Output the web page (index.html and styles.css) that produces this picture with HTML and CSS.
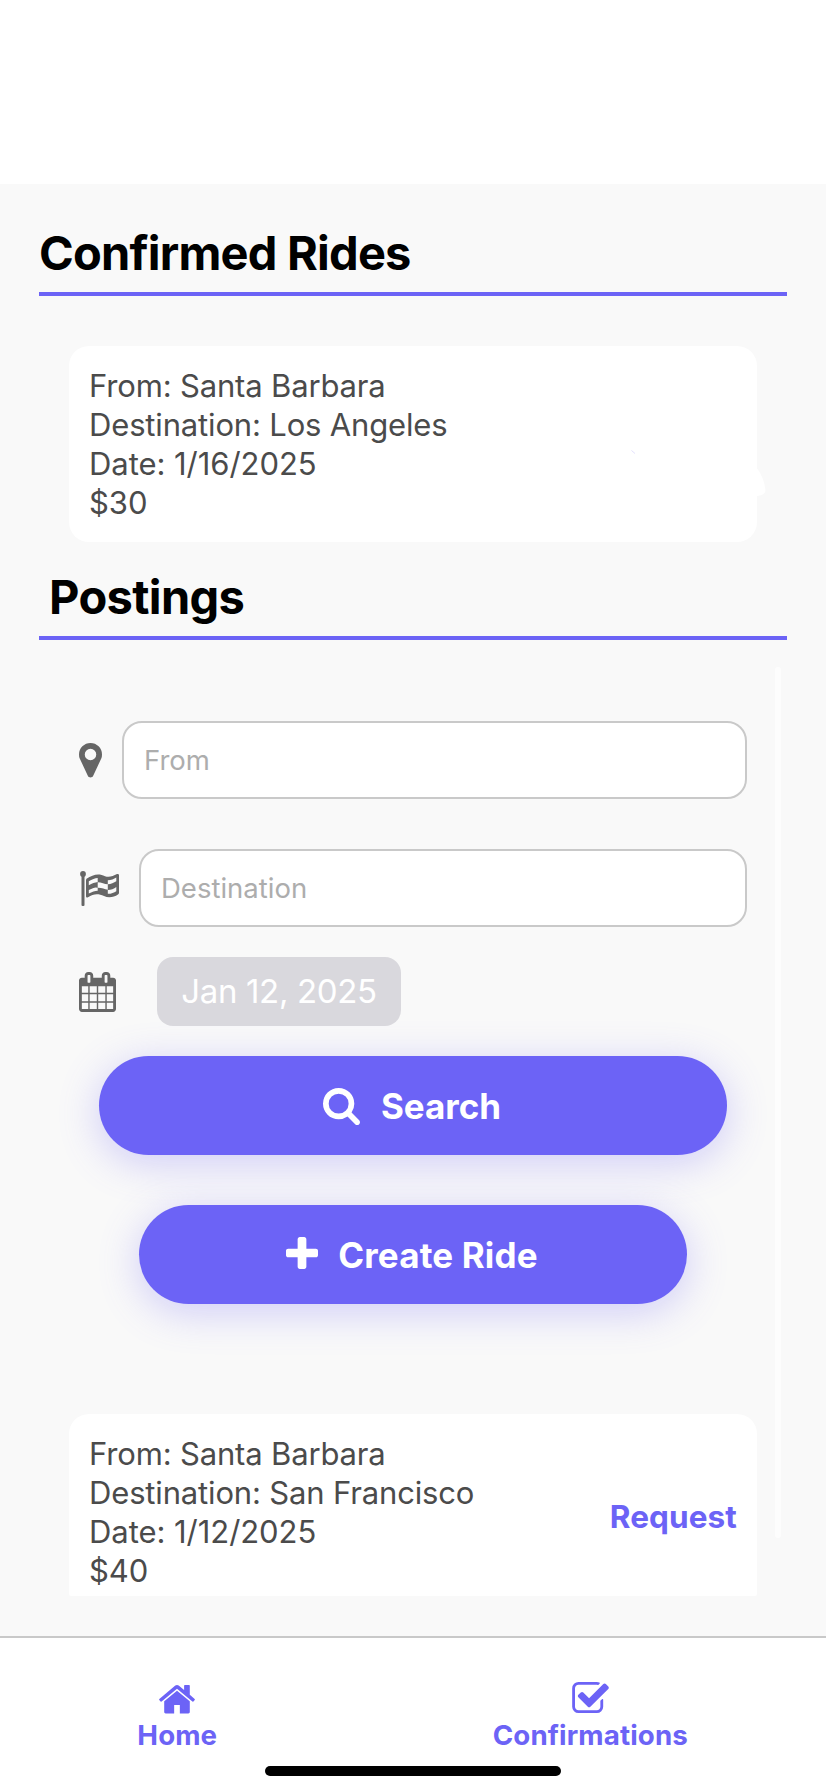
FILE: index.html
```html
<!DOCTYPE html>
<html lang="en">
<head>
<meta charset="utf-8">
<title>Rides</title>
<link rel="stylesheet" href="styles.css">
</head>
<body>
<div class="screen">
  <main class="content">
    <h1 class="heading">Confirmed Rides</h1>
    <section class="card card-confirmed">
      <div class="ride">
        <p>From: Santa Barbara</p>
        <p>Destination: Los Angeles</p>
        <p class="numeric">Date: 1/16/2025</p>
        <p class="numeric">$30</p>
      </div>
      <svg class="smudge" viewBox="0 0 10 30"><path d="M0 0Q8 10 9.500 23Q9 29 0 29Z"/></svg>
      <svg class="speck" viewBox="0 0 10 10"><path d="M4.500 4.500l3.500 3"/></svg>
    </section>
    <h1 class="heading heading-postings">Postings</h1>
    <section class="postings">
      <div class="scrollbar"></div>
      <div class="field-row">
        <svg class="icon icon-pin" viewBox="0 128 1024 1536"><path d="M768 640q0-106-75-181t-181-75-181 75-75 181 75 181 181 75 181-75 75-181zm256 0q0 109-33 179l-364 774q-16 33-47.500 52t-67.500 19-67.500-19-46.500-52l-365-774q-33-70-33-179 0-212 150-362t362-150 362 150 150 362z"/></svg>
        <div class="input">From</div>
      </div>
      <div class="field-row field-destination">
        <svg class="icon icon-flag" viewBox="0 0 39 35">
          <circle cx="3" cy="3" r="2.900"/>
          <rect x="1.500" y="3" width="3" height="32" rx="1"/>
          <path fill-rule="evenodd" d="M6.500 7.800C13 3.200 19 2 25 5.200C29 6.700 33 5.200 37 3Q39 2.500 39 4.200V21.800Q39 22.900 38 23.500C34 26.300 28.500 27.300 24 25.100C18 22.300 13.500 22.800 8 26.300Q6 27.100 6 25.300V9ZM8.800 10.300V14.200C12 12.300 15 11.200 17.700 10.900V7C15 7.200 12 8.400 8.800 10.300ZM17.700 11.200V16.700C21.500 16.500 24.500 18.100 27.800 18.700V13.300C24.500 13 21.500 11.300 17.700 11.200ZM27.800 9.300V13.200C31 13.200 34 11.700 36.300 10.200V6.500C34 8 31 9.300 27.800 9.300ZM8.800 19.100V22.600C12 20.900 15 19.900 17.700 19.800V16.200C15 16.400 12 17.200 8.800 19.100ZM27.800 19V22.800C31 22.900 34 21.600 36.300 20.200V16C34 17.700 31 19 27.800 19Z"/>
        </svg>
        <div class="input">Destination</div>
      </div>
      <div class="date-row">
        <svg class="icon icon-calendar" viewBox="64 0 1664 1792"><path d="M192 1664h288v-288h-288v288zm352 0h320v-288h-320v288zm-352-352h288v-320h-288v320zm352 0h320v-320h-320v320zm-352-384h288v-288h-288v288zm736 736h320v-288h-320v288zm-384-736h320v-288h-320v288zm768 736h288v-288h-288v288zm-384-352h320v-320h-320v320zm-352-864v-288q0-13-9.500-22.500t-22.500-9.500h-64q-13 0-22.500 9.500t-9.500 22.500v288q0 13 9.500 22.500t22.500 9.500h64q13 0 22.500-9.500t9.500-22.500zm736 864h288v-320h-288v320zm-384-384h320v-288h-320v288zm384 0h288v-288h-288v288zm32-480v-288q0-13-9.500-22.500t-22.500-9.500h-64q-13 0-22.500 9.500t-9.500 22.500v288q0 13 9.500 22.500t22.500 9.500h64q13 0 22.500-9.500t9.500-22.500zm384-64v1280q0 52-38 90t-90 38h-1408q-52 0-90-38t-38-90v-1280q0-52 38-90t90-38h128v-96q0-66 47-113t113-47h64q66 0 113 47t47 113v96h384v-96q0-66 47-113t113-47h64q66 0 113 47t47 113v96h128q52 0 90 38t38 90z"/></svg>
        <div class="date">Jan 12, 2025</div>
      </div>
      <div class="button button-search">
        <svg class="icon-search" viewBox="64 128 1664 1664"><path d="M1216 832q0-185-131.500-316.500t-316.500-131.500-316.500 131.500-131.500 316.500 131.500 316.500 316.500 131.500 316.500-131.500 131.500-316.500zm512 832q0 52-38 90t-90 38q-54 0-90-38l-343-342q-179 124-399 124-143 0-273.500-55.500t-225-150-150-225-55.500-273.500 55.500-273.500 150-225 225-150 273.500-55.500 273.500 55.500 225 150 150 225 55.500 273.500q0 220-124 399l343 343q37 37 37 90z"/></svg>
        <span>Search</span>
      </div>
      <div class="button button-create">
        <svg class="icon-plus" viewBox="192 128 1408 1408"><path d="M1600 736v192q0 40-28 68t-68 28h-416v416q0 40-28 68t-68 28h-192q-40 0-68-28t-28-68v-416h-416q-40 0-68-28t-28-68v-192q0-40 28-68t68-28h416v-416q0-40 28-68t68-28h192q40 0 68 28t28 68v416h416q40 0 68 28t28 68z"/></svg>
        <span>Create Ride</span>
      </div>
      <div class="card card-posting">
        <div class="ride">
          <p>From: Santa Barbara</p>
          <p>Destination: San Francisco</p>
          <p class="numeric">Date: 1/12/2025</p>
          <p class="numeric">$40</p>
        </div>
        <span class="request">Request</span>
      </div>
    </section>
  </main>
  <nav class="tabs">
    <div class="tab">
      <svg class="icon-home" viewBox="90 253 1612 1283"><path d="M1472 992v480q0 26-19 45t-45 19h-384v-384h-256v384h-384q-26 0-45-19t-19-45v-480q0-1 .5-3t.5-3l575-474 575 474q1 2 1 6zm223-69l-62 74q-8 9-21 11h-3q-13 0-21-7l-692-577-692 577q-12 8-24 7-13-2-21-11l-62-74q-8-10-7-23.500t11-21.500l719-599q32-26 76-26t76 26l244 204v-195q0-14 9-23t23-9h192q14 0 23 9t9 23v408l219 182q10 8 11 21.500t-7 23.500z"/></svg>
      <span>Home</span>
    </div>
    <div class="tab">
      <svg class="icon-check" viewBox="64 128 1664 1408"><path d="M1472 930v318q0 119-84.500 203.500t-203.500 84.500h-832q-119 0-203.500-84.500t-84.500-203.500v-832q0-119 84.500-203.500t203.500-84.500h832q63 0 117 25 15 7 18 23 3 17-9 29l-49 49q-10 10-23 10-3 0-9-2-23-6-45-6h-832q-66 0-113 47t-47 113v832q0 66 47 113t113 47h832q66 0 113-47t47-113v-254q0-13 9-22l64-64q10-10 23-10 6 0 12 3 20 8 20 29zm231-489l-814 814q-24 24-57 24t-57-24l-430-430q-24-24-24-57t24-57l110-110q24-24 57-24t57 24l263 263 647-647q24-24 57-24t57 24l110 110q24 24 24 57t-24 57z"/></svg>
      <span>Confirmations</span>
    </div>
    <div class="home-indicator"></div>
  </nav>
</div>
</body>
</html>
```
FILE: styles.css
```css
* { box-sizing: border-box; }
body {
  margin: 0;
  background: #fff;
  font-family: Inter, "Liberation Sans", sans-serif;
}
h1, p { margin: 0; }
svg { display: block; flex: none; fill: currentColor; overflow: visible; }
p, span { white-space: nowrap; }

.screen {
  display: flex;
  flex-direction: column;
  width: 826px;
  height: 1792px;
  padding-top: 184px;
  overflow: hidden;
}
.content {
  height: 1452px;
  padding: 39px 39px 0;
  background: #f9f9f9;
}
.heading {
  height: 73px;
  border-bottom: 4px solid #6c63f6;
  color: #000;
  font-size: 47px;
  font-weight: 700;
  letter-spacing: -0.78px;
  line-height: 60px;
}
.heading-postings {
  margin-top: 25px;
  padding-left: 10px;
  letter-spacing: -0.65px;
}

.card {
  position: relative;
  display: flex;
  justify-content: space-between;
  margin: 0 30px;
  padding: 20px;
  border-radius: 20px;
  background: #fff;
}
.card-confirmed { height: 196px; margin-top: 50px; }
.card-posting {
  height: 182px;
  margin-top: 110px;
  border-radius: 20px 20px 2px 2px;
}
.ride {
  color: #4b4b4b;
  font-size: 31px;
  letter-spacing: -0.16px;
  line-height: 39px;
}
.ride .numeric { letter-spacing: -0.05px; }
.smudge {
  position: absolute;
  top: 121px;
  left: 687px;
  width: 10px;
  height: 30px;
  color: #fff;
}
.speck {
  position: absolute;
  top: 100px;
  left: 558px;
  width: 10px;
  height: 10px;
  fill: none;
  stroke: #d5d2fb;
  stroke-width: 0.7;
}
.request {
  padding-top: 61px;
  color: #6c63f6;
  font-size: 31.500px;
  font-weight: 700;
  letter-spacing: 0.1px;
  line-height: 44px;
}

.postings {
  position: relative;
  padding-top: 81px;
}
.scrollbar {
  position: absolute;
  top: 27px;
  right: 6px;
  width: 6px;
  height: 871px;
  border-radius: 3px;
  background: #fdfdfd;
}
.field-row, .date-row {
  display: flex;
  align-items: center;
  margin: 0 40px;
}
.field-row { height: 78px; gap: 20px; }
.field-destination { margin-top: 50px; }
.date-row { height: 69px; margin-top: 30px; gap: 41px; }
.icon { color: #666; }
.icon-pin { width: 23px; height: 34.500px; }
.icon-flag { width: 39px; height: 35px; margin-left: 1px; }
.icon-calendar { width: 37px; height: 40px; }
.input {
  flex: 1;
  height: 78px;
  padding-left: 20px;
  border: 2px solid #c9c9c9;
  border-radius: 20px;
  background: #fff;
  color: #adadad;
  font-size: 27.500px;
  line-height: 74px;
}
.date {
  width: 244px;
  border-radius: 16px;
  background: #d9d8dd;
  color: #fff;
  font-size: 33px;
  letter-spacing: -0.36px;
  line-height: 69px;
  text-align: center;
}

.button {
  display: flex;
  align-items: center;
  justify-content: center;
  height: 99px;
  border-radius: 50px;
  background: #6c63f6;
  box-shadow: 0 8px 40px rgba(108, 99, 246, 0.3);
  color: #fff;
  font-size: 35px;
  font-weight: 700;
}
.button-search { margin: 30px 60px 0; padding-right: 2px; gap: 21px; }
.button-create { margin: 50px 100px 0; padding-right: 2px; gap: 20px; letter-spacing: 0.15px; }
.icon-search { width: 37px; height: 37px; margin-top: 2px; }
.icon-plus { width: 32px; height: 32px; margin-bottom: 3px; }

.tabs {
  position: relative;
  display: flex;
  height: 156px;
  border-top: 2px solid #c9c9c9;
  background: #fff;
  color: #6c63f6;
  font-size: 27.700px;
  font-weight: 700;
  letter-spacing: 0.12px;
}
.tab {
  display: flex;
  flex-direction: column;
  align-items: center;
  justify-content: flex-end;
  width: 355px;
  height: 114px;
}
.tab + .tab { width: 472px; }
.tab span { line-height: 34px; margin-top: 5px; }
.icon-home { width: 36px; height: 28.500px; }
.icon-check { width: 37px; height: 31px; }
.home-indicator {
  position: absolute;
  top: 128px;
  left: 265px;
  width: 296px;
  height: 10px;
  border-radius: 5px;
  background: #000;
}
```
